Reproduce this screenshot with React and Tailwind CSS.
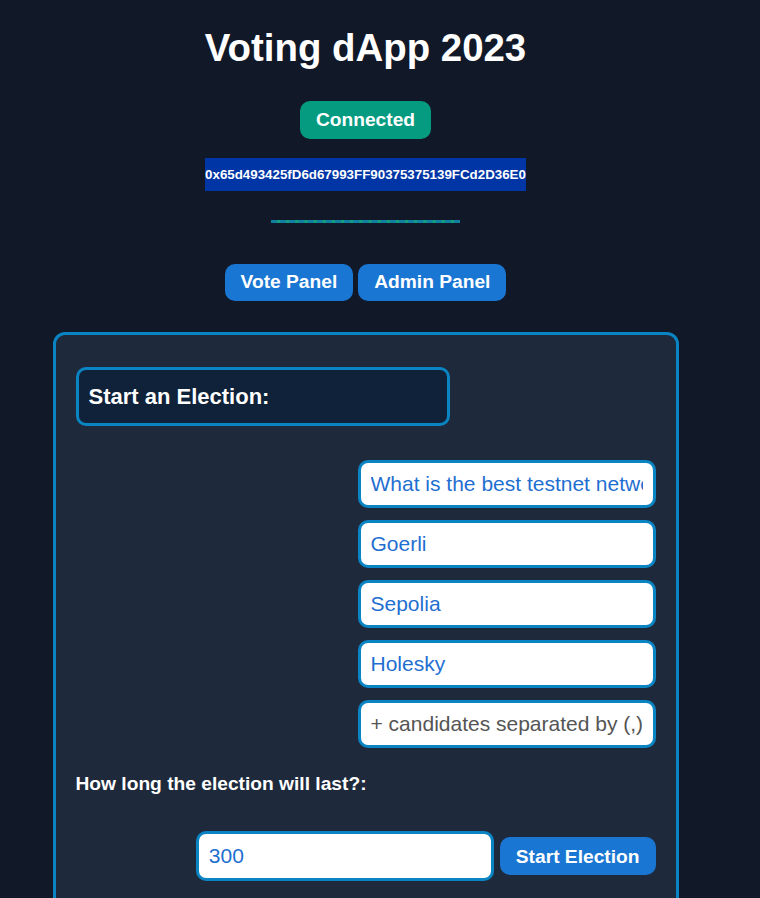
import React from "react";

const inputCls =
  "block w-[298px] h-[48px] rounded-[10px] border-[3px] border-[#0b84c4] bg-white px-[10px] text-[21px] text-[#1f6fd1] placeholder:text-[#555] outline-none";

export default function App() {
  return (
    <div className="min-h-screen bg-[#111827] font-['Liberation_Sans',Arial,sans-serif] text-white">
      <div className="w-[731px] flex flex-col items-center pt-[26px]">
        <h1 className="text-[38.4px] font-bold leading-[44px]">Voting dApp 2023</h1>

        <button className="mt-[31px] h-[38px] px-[16px] rounded-[10px] bg-[#059b80] text-[19.2px] font-bold">
          Connected
        </button>

        <div className="mt-[19px] h-[33px] flex items-center bg-[#0035a6] text-[13.33px] font-bold">
          0x65d493425fD6d67993FF90375375139FCd2D36E0
        </div>

        <div className="mt-[29px] w-[189px] h-[3px] bg-[#10a080] border-t-[3px] border-dashed border-[#127fa0]" />

        <div className="mt-[41px] flex gap-[5px]">
          <button className="h-[37px] px-[16px] rounded-[10px] bg-[#1976d2] text-[19.2px] font-bold">
            Vote Panel
          </button>
          <button className="h-[37px] px-[16px] rounded-[10px] bg-[#1976d2] text-[19.2px] font-bold">
            Admin Panel
          </button>
        </div>

        <div className="mt-[31px] w-[626px] rounded-[12px] border-[3px] border-[#0b84c4] bg-[#1e293b] pt-[32px] px-[20px] pb-[40px]">
          <div className="w-[374px] h-[59px] flex items-center rounded-[10px] border-[3px] border-[#0b84c4] bg-[#0f2239] px-[10px] text-[22px] font-bold">
            Start an Election:
          </div>

          <div className="mt-[34px] flex flex-col items-end gap-[12px]">
            <input className={inputCls} defaultValue="What is the best testnet network?" />
            <input className={inputCls} defaultValue="Goerli" />
            <input className={inputCls} defaultValue="Sepolia" />
            <input className={inputCls} defaultValue="Holesky" />
            <input className={inputCls} placeholder="+ candidates separated by (,)" />
          </div>

          <p className="mt-[22px] text-[19.2px] font-bold">How long the election will last?:</p>

          <div className="mt-[32px] flex justify-end items-center gap-[6px]">
            <input className={inputCls + " h-[50px]"} defaultValue="300" />
            <button className="h-[38px] pt-[3px] px-[16px] rounded-[10px] bg-[#1976d2] text-[19.2px] font-bold">
              Start Election
            </button>
          </div>
        </div>
      </div>
    </div>
  );
}
